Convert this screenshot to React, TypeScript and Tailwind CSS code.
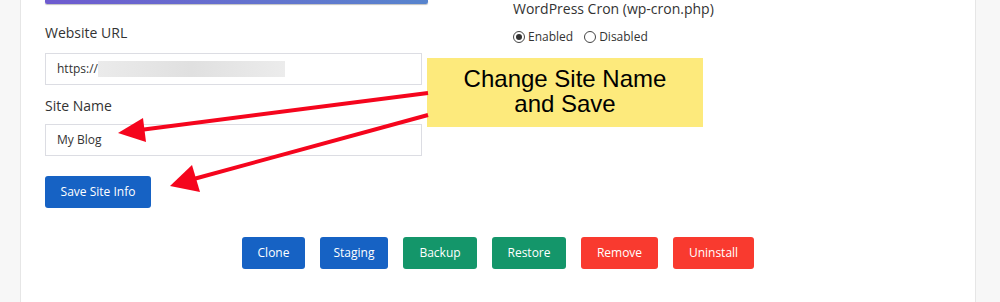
import React from 'react';

const actions = [
  { label: 'Clone', w: 'w-[63px]', color: 'bg-[#1662c4]' },
  { label: 'Staging', w: 'w-[68px]', color: 'bg-[#1662c4]' },
  { label: 'Backup', w: 'w-[74px]', color: 'bg-[#14966a]' },
  { label: 'Restore', w: 'w-[74px]', color: 'bg-[#14966a]' },
  { label: 'Remove', w: 'w-[77px]', color: 'bg-[#f93a2f]' },
  { label: 'Uninstall', w: 'w-[81px]', color: 'bg-[#f93a2f]' },
];

const Radio = ({ checked, label }: { checked?: boolean; label: string }) => (
  <label className="flex items-center gap-[3px]">
    <span className="w-[12px] h-[12px] rounded-full border border-[#444] flex items-center justify-center">
      {checked && <span className="w-[6px] h-[6px] rounded-full bg-[#333]" />}
    </span>
    <span className="text-[12px] text-[#333]">{label}</span>
  </label>
);

export default function App() {
  return (
    <div className="relative w-[1000px] h-[302px] bg-[#f7f7f7] overflow-hidden font-['Open_Sans',sans-serif]">
      <div className="ml-[20px] w-[956px] h-full bg-white border-x border-[#e6e6e6] px-[24px] flex flex-col">
        <div className="flex">
          {/* Left column */}
          <div className="w-[384px]">
            <div className="h-[4px] w-[383px] bg-gradient-to-r from-[#6e5bcf] to-[#5784cd] rounded-b-[2px] shadow-[0_1px_1px_rgba(0,0,0,0.25)]" />
            <div className="mt-[20px] text-[14px] text-[#333] leading-[18px]">Website URL</div>
            <div className="mt-[11px] w-[377px] h-[32px] border border-[#dcdde3] flex items-center pl-[11px] text-[12px] text-[#333]">
              <span>https://</span>
              <span className="w-[187px] h-[16px] bg-gradient-to-r from-[#ebebeb] via-[#e0e0e0] to-[#ececec]" />
            </div>
            <div className="mt-[12px] text-[14px] text-[#333] leading-[18px]">Site Name</div>
            <div className="mt-[9px] w-[377px] h-[32px] border border-[#dcdde3] flex items-center pl-[11px] text-[12px] text-[#333]">
              My Blog
            </div>
            <button className="mt-[20px] w-[106px] h-[32px] rounded-[3px] bg-[#1662c4] text-white text-[12px]">
              Save Site Info
            </button>
          </div>
          {/* Right column */}
          <div className="ml-[84px]">
            <div className="text-[14px] text-[#333] leading-[18px]">WordPress Cron (wp-cron.php)</div>
            <div className="mt-[10px] flex items-center gap-[11px]">
              <Radio checked label="Enabled" />
              <Radio label="Disabled" />
            </div>
          </div>
        </div>
        <div className="mt-[29px] flex justify-center gap-[15px]">
          {actions.map((a) => (
            <button key={a.label} className={`${a.w} h-[32px] rounded-[3px] ${a.color} text-white text-[12px]`}>
              {a.label}
            </button>
          ))}
        </div>
      </div>

      {/* Callout */}
      <div className="absolute left-[427px] top-[58px] w-[276px] h-[69px] bg-[#fdea7c] flex flex-col items-center justify-center pb-[3px] font-['Liberation_Sans',Arial,sans-serif] text-[24px] leading-[25px] text-black">
        <div>Change Site Name</div>
        <div>and Save</div>
      </div>

      {/* Arrows */}
      <svg className="absolute left-0 top-0 pointer-events-none" width="1000" height="302">
        <line x1="428" y1="93" x2="140" y2="130" stroke="#f5051d" strokeWidth="4" />
        <polygon points="118,133 143,118 146,142" fill="#f5051d" />
        <line x1="428" y1="115" x2="190" y2="180" stroke="#f5051d" strokeWidth="4" />
        <polygon points="170,186 192,165 200,192" fill="#f5051d" />
      </svg>
    </div>
  );
}
